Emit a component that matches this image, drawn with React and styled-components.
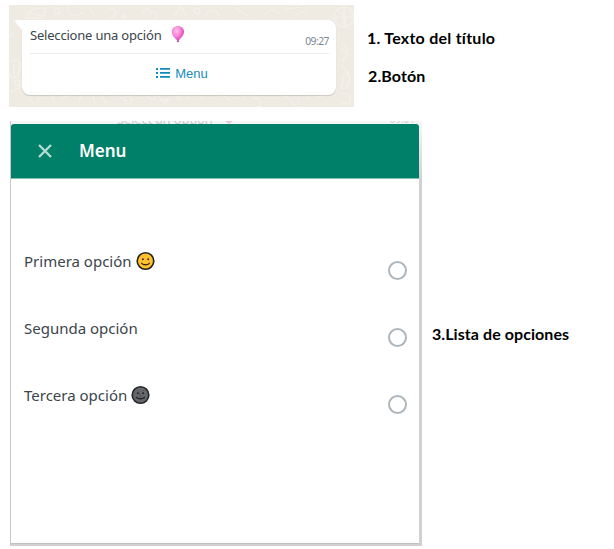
import styled, { createGlobalStyle } from 'styled-components'

const GlobalStyle = createGlobalStyle`
  * {
    box-sizing: border-box;
  }
  body {
    margin: 0;
    background: #fff;
    overflow: hidden;
    font-family: 'Noto Sans', 'Open Sans', sans-serif;
  }
`

const Page = styled.main`
  width: 614px;
  height: 549px;
  padding: 5px 0 0 9px;
  display: flex;
  flex-direction: column;
  gap: 14px;
`

const Row = styled.section`
  display: flex;
  align-items: flex-start;
`

const Text = styled.span`
  font-size: ${({ $size }) => $size}px;
  font-weight: ${({ $weight }) => $weight || 400};
  letter-spacing: ${({ $spacing }) => $spacing || 0}px;
  color: ${({ $color }) => $color || '#3b454c'};
  line-height: 20px;
  white-space: nowrap;
`

const Chat = styled.div`
  position: relative;
  width: 345px;
  height: 102px;
  padding: 15px 18px 12px 13px;
  background: #efeae2;
`

const Doodles = styled.svg`
  position: absolute;
  inset: 0;
`

const Bubble = styled.div`
  position: relative;
  height: 75px;
  padding: 0 7px 0 8px;
  border-radius: 0 8px 8px 8px;
  background: #fff;
  box-shadow: 0 1px 1px rgba(11, 20, 26, 0.17);
`

const Tail = styled.svg`
  position: absolute;
  left: -8px;
  top: 0;
`

const Message = styled.div`
  height: 34px;
  padding-top: 5px;
  border-bottom: 1px solid #eceeee;
  display: flex;
  align-items: flex-start;

  svg {
    margin-left: 8px;
  }
`

const Time = styled(Text)`
  margin: 6px 0 0 auto;
`

const MenuButton = styled.button`
  width: 100%;
  height: 39px;
  padding: 0 0 0 5px;
  border: 0;
  background: none;
  display: flex;
  align-items: center;
  justify-content: center;
  gap: 5px;

  svg {
    margin-top: -1px;
  }
`

const Notes = styled.div`
  display: flex;
  flex-direction: column;
  gap: 18px;
  padding: 23px 0 0 13px;
`

const Note = styled(Text)`
  font-family: Lato, 'Noto Sans', sans-serif;
  font-variant-ligatures: none;
  padding-left: ${({ $indent }) => $indent || 0}px;
`

const ListNote = styled(Note)`
  margin: 203px 0 0 10px;
`

const Sheet = styled.div`
  width: 412px;
  height: 425px;
  margin-left: 1px;
  padding: 0 3px 2px 0;
  border-left: 1px solid #c6c8ca;
  background: linear-gradient(#f6f8f8 0, #d0d1d1 60px, #d0d1d1);
  display: flex;
  flex-direction: column;
`

const Behind = styled.div`
  height: 3px;
  flex: none;
  margin-right: -3px;
  padding: 0 7px 0 106px;
  background: #f5f7f7;
  overflow: hidden;
  display: flex;
  align-items: flex-end;

  span {
    margin-bottom: -5px;
  }
  svg {
    margin: 0 auto 0 12px;
  }
`

const Header = styled.header`
  height: 55px;
  flex: none;
  padding-left: 26px;
  border-radius: 3px 3px 0 0;
  background: #008069;
  display: flex;
  align-items: center;
  gap: 26px;
  border-bottom: 1px solid #80bfb2;
`

const Options = styled.div`
  flex: 1;
  padding: 72px 12px 0 13px;
  background: #fff;
  border-bottom: 1px solid #bfc3c5;
`

const Option = styled.div`
  height: 67.2px;
  display: flex;
  align-items: flex-start;

  > svg {
    margin: 0 0 0 4px;
  }
`

const Radio = styled.span`
  width: 19px;
  height: 19px;
  margin: 10px 0 0 auto;
  border: 2px solid #adb6bc;
  border-radius: 50%;
`

const Balloon = () => (
  <svg width="16" height="20" viewBox="0 0 16 20">
    <defs>
      <radialGradient id="balloon" cx=".38" cy=".3" r=".7">
        <stop offset="0" stopColor="#ffc3ef" />
        <stop offset=".5" stopColor="#fa82d5" />
        <stop offset="1" stopColor="#d43aaa" />
      </radialGradient>
    </defs>
    <path
      d="M7.8 1C4.2 1 1.8 3.4 1.8 6.7c0 3.4 2.9 6.2 5.4 8.6l-.4 1.5h2.2l-.4-1.5c2.5-2.4 5.4-5.2 5.4-8.6C14 3.4 11.4 1 7.8 1Z"
      fill="url(#balloon)"
    />
    <path d="m7.2 15.2 1.4 0 .6 1.8H6.8Z" fill="#c75aa3" />
  </svg>
)

const Face = ({ dark }) => {
  const ink = dark ? '#202326' : '#38291d'
  return (
    <svg width="19" height="20" viewBox="0 0 19 20">
      <circle
        cx="9.5"
        cy="10"
        r="8.3"
        fill={dark ? '#66686b' : '#ffc02e'}
        stroke={dark ? '#24272a' : '#20201f'}
        strokeWidth="1.6"
      />
      {dark && (
        <path
          d="M9 8v3.4l1.4.1M4.4 12.5l1 1.4M13.5 13.8l1-1.5M6 5.5h1.2M11.8 5.5h1.4"
          stroke="#505356"
          fill="none"
        />
      )}
      <circle cx="6.9" cy="8.3" r="1" fill={ink} />
      <circle cx="12.1" cy="8.3" r="1" fill={ink} />
      <path
        d="M5.7 12.3c1.6 1.9 6 1.9 7.6 0"
        fill="none"
        stroke={ink}
        strokeWidth="1.3"
        strokeLinecap="round"
      />
    </svg>
  )
}

const ListIcon = () => (
  <svg width="14" height="12" viewBox="0 0 14 12" fill="#128bb9">
    <path d="M0 1h2v2H0zM4 1h10v1.8H4zM0 5h2v2H0zM4 5h10v1.8H4zM0 9h2v2H0zM4 9h10v1.8H4z" />
  </svg>
)

const Wallpaper = () => (
  <Doodles width="345" height="102" fill="none" stroke="#f5f1eb" strokeWidth="1.2">
    <path d="M17 13c4-9 10-12 20-9l-3 9H17ZM20 8l14 3M60 0c-3 6 1 10 7 11l7-4M80 3l5 7M100 4c8-3 9 9 1 8M134 10c-1-8 7-8 8-2 6-3 9 4 1 8M164 13l8-12 6 11M196 11c5-8 12-9 14 1M225 2l15 10M255 11c4-8 12-8 15-2" />
    <circle cx="48" cy="6" r="3" />
    <circle cx="115" cy="11" r="2" />
    <circle cx="188" cy="6" r="3" />
    <circle cx="335" cy="12" r="10" />
    <path d="M325 12h20M335 2v20M328 5c7 3 9 9 9 17M274 5l18-3M285 11l12-6M332 37c9 5 7 15 0 20M331 44l6 3M332 60l8 9M334 76c-2-9 7-9 7 0l-3 7h-6ZM331 89h10v9h-10M2 57c8-5 11 1 8 9-2 8-8 10-10 2M5 59v12M0 32l5-4M2 87l12-6M18 84l6 15M29 97l1-13 12 2 3 12M52 94l13-6M70 98c1-14 19-16 27 0M83 86l3 12M101 84c8 1 9 12 18 12M137 91l8 4 3-8 4 8 8-1-6 6M177 95c4-8 12-8 17 0M208 86l14 10M234 96c0-8 8-10 11-2 8-3 9 8 2 8M268 86l13 8M299 94c1-7 8-8 10-2l8-2" />
    <circle cx="8" cy="78" r="3" />
    <circle cx="119" cy="95" r="4" />
    <circle cx="170" cy="93" r="2" />
    <circle cx="286" cy="96" r="4" />
  </Doodles>
)

const App = () => {
  return (
    <>
      <GlobalStyle />
      <Page>
        <Row>
          <Chat>
            <Wallpaper />
            <Bubble>
              <Tail width="9" height="10" viewBox="0 0 9 10">
                <path d="M9 0H1.5C.4 0 .3.8 1 1.6L8 10h1Z" fill="#fff" />
              </Tail>
              <Message>
                <Text $size={13} $spacing={-0.2}>
                  Seleccione una opción
                </Text>
                <Balloon />
                <Time $size={10.3} $spacing={-0.5} $color="#7b878e">
                  09:27
                </Time>
              </Message>
              <MenuButton>
                <ListIcon />
                <Text $size={13} $color="#168dbb">
                  Menu
                </Text>
              </MenuButton>
            </Bubble>
          </Chat>
          <Notes>
            <Note $size={16} $weight={700} $spacing={0.25} $color="#000">
              1. Texto del título
            </Note>
            <Note $size={16} $weight={700} $spacing={0.1} $color="#000" $indent={1}>
              2.Botón
            </Note>
          </Notes>
        </Row>
        <Row>
          <Sheet>
            <Behind>
              <Text $size={13} $spacing={-0.15} $color="#c9cccc">
                Select an option
              </Text>
              <svg width="8" height="3">
                <path d="M0 0h8L4 3Z" fill="#e9c6df" />
              </svg>
              <Text $size={10} $color="#cdd1d2">
                09:01
              </Text>
            </Behind>
            <Header>
              <svg width="16" height="16" viewBox="0 0 16 16">
                <path d="m2 2 12 12M14 2 2 14" stroke="#b3dad3" strokeWidth="2.4" />
              </svg>
              <Text $size={17} $weight={600} $color="#fff">
                Menu
              </Text>
            </Header>
            <Options>
              <Option>
                <Text $size={15}>Primera opción</Text>
                <Face />
                <Radio />
              </Option>
              <Option>
                <Text $size={15}>Segunda opción</Text>
                <Radio />
              </Option>
              <Option>
                <Text $size={15}>Tercera opción</Text>
                <Face dark />
                <Radio />
              </Option>
            </Options>
          </Sheet>
          <ListNote $size={16} $weight={700} $spacing={0.07} $color="#000">
            3.Lista de opciones
          </ListNote>
        </Row>
      </Page>
    </>
  )
}

export default App
